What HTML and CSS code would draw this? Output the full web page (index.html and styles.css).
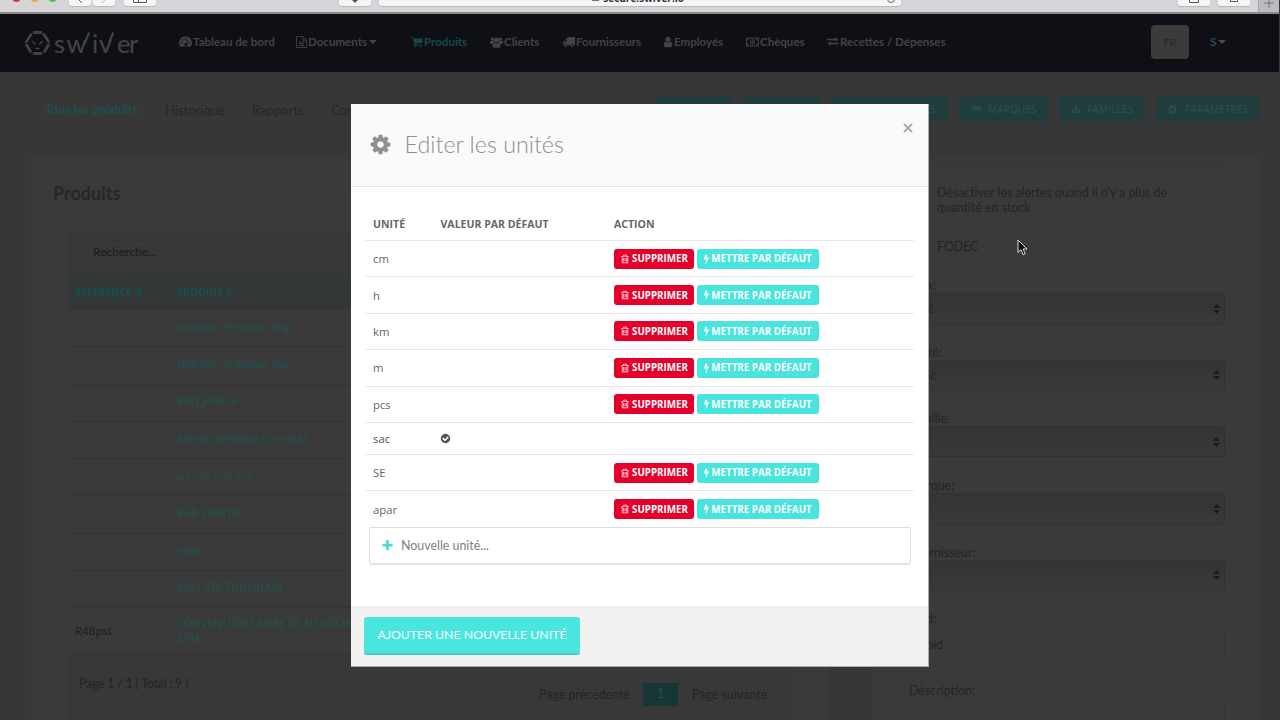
FILE: index.html
```html
<!DOCTYPE html>
<html lang="fr">
<head>
<meta charset="utf-8">
<title>Swiver - Produits</title>
<link rel="stylesheet" href="styles.css">
</head>
<body>
<svg class="defs" width="0" height="0">
  <symbol id="cog" viewBox="0 0 1792 1792"><path d="M1152 896q0-106-75-181t-181-75-181 75-75 181 75 181 181 75 181-75 75-181zm512-109v222q0 12-8 23t-20 13l-185 28q-19 54-39 91 35 50 107 138 10 12 10 25t-9 23q-27 37-99 108t-94 71q-12 0-26-9l-138-108q-44 23-91 38-16 136-29 186-7 28-36 28h-222q-14 0-24.500-8.500t-11.500-21.500l-28-184q-49-16-90-37l-141 107q-10 9-25 9-14 0-25-11-126-114-165-168-7-10-7-23 0-12 8-23 15-21 51-66.500t54-70.500q-27-50-41-99l-183-27q-13-2-21-12.500t-8-23.500v-222q0-12 8-23t19-13l186-28q14-46 39-92-40-57-107-138-10-12-10-24 0-10 9-23 26-36 98.500-107.500t94.500-71.500q13 0 26 10l138 107q44-23 91-38 16-136 29-186 7-28 36-28h222q14 0 24.500 8.500t11.500 21.500l28 184q49 16 90 37l142-107q9-9 24-9 13 0 25 10 129 119 165 170 7 8 7 22 0 12-8 23-15 21-51 66.500t-54 70.500q26 50 41 98l183 28q13 2 21 12.500t8 23.500z"/></symbol>
  <symbol id="check" viewBox="0 0 1792 1792"><path d="M1412 734q0-28-18-46l-91-90q-19-19-45-19t-45 19l-408 407-226-226q-19-19-45-19t-45 19l-91 90q-18 18-18 46 0 27 18 45l362 362q19 19 45 19 27 0 46-19l543-543q18-18 18-45zm252 162q0 209-103 385.500t-279.500 279.500-385.500 103-385.500-103-279.500-279.500-103-385.500 103-385.500 279.500-279.500 385.500-103 385.500 103 279.500 279.500 103 385.500z"/></symbol>
  <symbol id="trash" viewBox="0 0 1792 1792"><path d="M704 736v576q0 14-9 23t-23 9h-64q-14 0-23-9t-9-23v-576q0-14 9-23t23-9h64q14 0 23 9t9 23zm256 0v576q0 14-9 23t-23 9h-64q-14 0-23-9t-9-23v-576q0-14 9-23t23-9h64q14 0 23 9t9 23zm256 0v576q0 14-9 23t-23 9h-64q-14 0-23-9t-9-23v-576q0-14 9-23t23-9h64q14 0 23 9t9 23zm128 724v-948h-896v948q0 22 7 40.500t14.500 27 10.500 8.500h832q3 0 10.500-8.500t14.500-27 7-40.500zm-672-1076h448l-48-117q-7-9-17-11h-317q-10 2-17 11zm928 32v64q0 14-9 23t-23 9h-96v948q0 83-47 143.500t-113 60.500h-832q-66 0-113-58.500t-47-141.500v-952h-96q-14 0-23-9t-9-23v-64q0-14 9-23t23-9h309l70-167q15-37 54-63t79-26h320q40 0 79 26t54 63l70 167h309q14 0 23 9t9 23z"/></symbol>
  <symbol id="bolt" viewBox="448 0 896 1792"><path d="M1333 566q18 20 7 44l-540 1157q-13 25-42 25-4 0-14-2-17-5-25.500-19t-4.500-30l197-808-406 101q-4 1-12 1-18 0-31-11-18-15-13-39l201-825q4-14 16-23t28-9h328q19 0 32 12.500t13 29.500q0 8-5 18l-171 463 396-98q8-2 12-2 19 0 34 15z"/></symbol>
  <symbol id="plus" viewBox="0 0 1792 1792"><path d="M1600 736v192q0 40-28 68t-68 28h-416v416q0 40-28 68t-68 28h-192q-40 0-68-28t-28-68v-416h-416q-40 0-68-28t-28-68v-192q0-40 28-68t68-28h416v-416q0-40 28-68t68-28h192q40 0 68 28t28 68v416h416q40 0 68 28t28 68z"/></symbol>
  <symbol id="user" viewBox="200 0 1400 1792"><path d="M1536 1399q0 109-62.500 187t-150.500 78h-854q-88 0-150.500-78t-62.500-187q0-85 8.500-160.500t31.500-152 58.500-131 94-89 134.500-34.500q131 128 313 128t313-128q76 0 134.500 34.500t94 89 58.500 131 31.500 152 8.500 160.500zm-256-887q0 159-112.500 271.500t-271.500 112.500-271.500-112.500-112.500-271.500 112.500-271.500 271.500-112.500 271.500 112.500 112.500 271.500z"/></symbol>
  <symbol id="cart" viewBox="0 0 1792 1792"><path d="M704 1536q0 52-38 90t-90 38-90-38-38-90 38-90 90-38 90 38 38 90zm896 0q0 52-38 90t-90 38-90-38-38-90 38-90 90-38 90 38 38 90zm128-1088v512q0 24-16.500 42.500t-40.500 21.500l-1044 122q13 60 13 70 0 16-24 64h920q26 0 45 19t19 45-19 45-45 19h-1024q-26 0-45-19t-19-45q0-11 8-31.500t16-36 21.500-40 15.500-29.500l-177-823h-204q-26 0-45-19t-19-45 19-45 45-19h256q16 0 28.500 6.500t19.500 15.500 13 24.500 8 26 5.500 29.500 4.500 26h1201q26 0 45 19t19 45z"/></symbol>
  <symbol id="truck" viewBox="0 0 1792 1792"><path transform="translate(1792 0) scale(-1 1)" d="M1152 1408q0-52 38-90t90-38 90 38 38 90-38 90-90 38-90-38-38-90zm384-512h-384v-256h158q13 0 22 9l195 195q9 9 9 22v30zm-1280 512q0-52 38-90t90-38 90 38 38 90-38 90-90 38-90-38-38-90zm-256-1088v1024q0 64 64 64h64q0 106 75 181t181 75 181-75 75-181h384q0 106 75 181t181 75 181-75 75-181h64q64 0 64-64 0-26-19-45t-45-19v-320q0-110-30-160l-230-230q-50-45-110-45h-160v-192q0-26-19-45t-45-19h-1024q-26 0-45 19t-19 45z"/></symbol>
  <symbol id="dash" viewBox="0 0 14 12"><path fill-rule="evenodd" d="M7 .5a7 7 0 0 0-6 10.600q.3.400.8.400h10.400q.5 0 .8-.4A7 7 0 0 0 7 .5zM2.800 6.500a.9.900 0 1 1 0 1.800.9.900 0 0 1 0-1.800zM4 3.500a.9.900 0 1 1 0 1.800.9.900 0 0 1 0-1.800zM7 2.100a.9.900 0 1 1 0 1.800.9.900 0 0 1 0-1.800zM11.200 6.500a.9.900 0 1 1 0 1.800.9.900 0 0 1 0-1.800zM9.300 3.700l.7.300-1.600 4a1.600 1.600 0 1 1-.8-.3z"/></symbol>
  <symbol id="doc" viewBox="0 0 12 13"><path fill="none" stroke="currentColor" d="M.5 .5h7l4 4v8H.500zM7.500 .5v4h4M3 6.500h6M3 8.500h6M3 10.500h6"/></symbol>
  <symbol id="users" viewBox="0 0 15 13"><circle cx="3" cy="3.200" r="2"/><circle cx="12" cy="3.200" r="2"/><circle cx="7.500" cy="4.200" r="2.900"/><path d="M0 8V6.500Q0 5 1.500 5q1.500.7 3 .3Q4.500 7 5.300 7.500q-1.800.3-2.500 1.300H1.500Q0 8.800 0 8zM15 8V6.500Q15 5 13.500 5q-1.500.7-3 .3 0 1.700-.8 2.200 1.800.3 2.500 1.300h1.300Q15 8.800 15 8zM2.800 11.200q0-3.500 2.500-3.700 2.200 1.400 4.400 0 2.500.2 2.500 3.700 0 1.800-1.600 1.800H4.400Q2.800 13 2.800 11.200z"/></symbol>
  <symbol id="money" viewBox="0 0 14 10"><path fill="none" stroke="currentColor" stroke-width="1.100" d="M.6 .6h12.800v8.800H.6z"/><path fill="none" stroke="currentColor" d="M1 3Q3 3 3 1M11 1q0 2 2 2M1 7q2 0 2 2M11 9q0-2 2-2"/><ellipse cx="7" cy="5" rx="2.100" ry="2.700" fill="none" stroke="currentColor"/><path d="M6.500 3.500h1v3h-1z"/></symbol>
  <symbol id="swap" viewBox="0 0 13 10"><path d="M0 2h9V0l3.500 2.700L9 5.300V3.600H0zM13 8H4v2L.5 7.300 4 4.700v1.700h9z"/></symbol>
  <symbol id="flag" viewBox="0 0 12 10"><path d="M1 0h1v10H1zM2.500 1.200q2-1.200 4 0t4.500 0v4.600q-2.500 1.200-4.500 0t-4 0z"/></symbol>
  <symbol id="sitemap" viewBox="0 0 12 10"><path d="M4.500 0h3v3h-1v1.500h4V7H12v3H8.500V7h1V5.500h-3V7h1v3h-3V7h1V5.500h-3V7h1v3H0V7h1.500V4.500h4V3h-1z"/></symbol>
  <symbol id="sort" viewBox="0 0 7 10"><path d="M0 4l3.500-4L7 4zM0 6h7l-3.500 4z"/></symbol>
</svg>

<div class="screen">
  <div class="chrome">
    <div class="lights"><i class="red"></i><i class="yellow"></i><i class="green"></i></div>
    <div class="pill back"><svg width="6" height="8" viewBox="0 0 6 8"><path d="M5 0L1 4l4 4" fill="none" stroke="#555"/></svg></div>
    <div class="pill fwd"><svg width="6" height="8" viewBox="0 0 6 8"><path d="M1 0l4 4-4 4" fill="none" stroke="#bbb"/></svg></div>
    <div class="pill side"><svg width="14" height="8" viewBox="0 0 14 8"><path d="M.5 0v7.500h13V0M5.500 0v7.500" fill="none" stroke="#555"/></svg></div>
    <div class="pill ext"><svg width="8" height="8" viewBox="0 0 8 8"><path d="M0 4h8L4 8z" fill="#555"/></svg></div>
    <div class="pill address"><i class="lock"></i><span>secure.swiver.io</span><svg width="8" height="8" viewBox="0 0 8 8"><circle cx="4" cy="4" r="3.500" fill="none" stroke="#666"/></svg></div>
    <div class="pill share"><svg width="10" height="8" viewBox="0 0 10 8"><path d="M.5 0v7.500h9V0" fill="none" stroke="#555"/></svg></div>
    <div class="pill tabs"><svg width="8" height="8" viewBox="0 0 8 8"><path d="M.5 0v6.500h7V0" fill="none" stroke="#555"/></svg></div>
    <div class="newtab"><svg width="10" height="10" viewBox="0 0 10 10"><path d="M5 0v10M0 5h10" fill="none" stroke="#777"/></svg></div>
  </div>

  <header class="navbar">
    <svg class="logo" width="115" height="30" viewBox="0 0 115 30">
      <g fill="none" stroke="currentColor" stroke-width="2.800" stroke-linecap="round">
        <path d="M10 4.500h7M20 6.500l4.500 7M24.500 17l-4 6.500M10 25.500h7M6.500 23.500L2.500 17M2.500 13.500l4.500-7"/>
        <path stroke-width="1.500" d="M8.500 13.500l3 2.500M18.500 13.500l-3 2.500M12 20.500h3"/>
        <path stroke-width="2.200" stroke-linecap="butt" d="M60.700 15.500L65.200 4.500M84.800 15.500L89.300 4.500"/>
      </g>
      <text x="30 42.500 68 75 93 105" y="25">swiver</text>
    </svg>
    <nav class="menu">
      <a><svg width="13" height="11"><use href="#dash"/></svg>Tableau de bord</a>
      <a><svg width="11" height="12"><use href="#doc"/></svg>Documents<i class="caret"></i></a>
      <a class="on"><svg width="12" height="12"><use href="#cart"/></svg>Produits</a>
      <a><svg width="13" height="12"><use href="#users"/></svg>Clients</a>
      <a><svg width="13" height="13"><use href="#truck"/></svg>Fournisseurs</a>
      <a><svg width="10" height="12"><use href="#user"/></svg>Employés</a>
      <a><svg width="13" height="10"><use href="#money"/></svg>Chèques</a>
      <a><svg width="12" height="9"><use href="#swap"/></svg>Recettes / Dépenses</a>
    </nav>
    <div class="lang">FR</div>
    <div class="account">S<i class="caret"></i></div>
  </header>

  <div class="subnav">
    <div class="links"><a class="on">Tous les produits</a><a>Historique</a><a>Rapports</a><a>Corbeille</a></div>
    <div class="tools">
      <b></b><b></b><b class="right">UNITÉS</b>
      <b><svg width="11" height="9"><use href="#flag"/></svg>MARQUES</b>
      <b><svg width="10" height="8"><use href="#sitemap"/></svg>FAMILLES</b>
      <b><svg width="11" height="11"><use href="#cog"/></svg>PARAMÈTRES</b>
    </div>
  </div>

  <main class="columns">
    <section class="card list">
      <h2>Produits</h2>
      <div class="panel">
        <div class="search"><div>Recherche...</div></div>
        <div class="row head"><span>RÉFÉRENCE <svg width="7" height="9"><use href="#sort"/></svg></span><span>PRODUIT <svg width="7" height="9"><use href="#sort"/></svg></span></div>
        <div class="row"><span></span><a>charbon el manar 3kg</a></div>
        <div class="row"><span></span><a>charbon el manar 5kg</a></div>
        <div class="row"><span></span><a>BBQ jetable</a></div>
        <div class="row"><span></span><a>allume barbaqu el manar</a></div>
        <div class="row"><span></span><a class="arabic">فحم المنار ثلاثة كيلو</a></div>
        <div class="row"><span></span><a>BAB 200X120</a></div>
        <div class="row"><span></span><a>ewer</a></div>
        <div class="row"><span></span><a>6451 STE TUNISIENN</a></div>
        <div class="row tall"><span>R4BpsL</span><a>CONVENTION CADRE DE NEGOCIATION<br>2016</a></div>
        <div class="foot"><span>Page 1 / 1 ( Total : 9 )</span><div class="pager"><span>Page précédente</span><b>1</b><span>Page suivante</span></div></div>
      </div>
    </section>
    <section class="card form">
      <div class="rule"></div>
      <p class="opt">Désactiver les alertes quand il n'y a plus de quantité en stock</p>
      <p class="opt fodec">FODEC</p>
      <div class="field"><label>TVA:</label><div class="select">12<svg width="7" height="12"><use href="#sort"/></svg></div></div>
      <div class="field"><label>Unité:</label><div class="select">sac<svg width="7" height="12"><use href="#sort"/></svg></div></div>
      <div class="field"><label>Famille:</label><div class="select"><svg width="7" height="12"><use href="#sort"/></svg></div></div>
      <div class="field"><label>Marque:</label><div class="select"><svg width="7" height="12"><use href="#sort"/></svg></div></div>
      <div class="field"><label>Fournisseur:</label><div class="select"><svg width="7" height="12"><use href="#sort"/></svg></div></div>
      <div class="field poid"><label>Poid:</label><div class="input">Poid</div></div>
      <div class="field"><label>Déscription:</label><div class="input"></div></div>
    </section>
  </main>

  <div class="modal">
    <div class="modal-head"><svg width="23" height="23"><use href="#cog"/></svg><h1>Editer les unités</h1><svg class="close" width="10" height="10" viewBox="0 0 10 10"><path d="M1 1l8 8M9 1L1 9"/></svg></div>
    <div class="modal-body">
      <div class="unit th"><span>UNITÉ</span><span>VALEUR PAR DÉFAUT</span><span>ACTION</span></div>
      <div class="unit"><span>cm</span><span></span><div class="acts"><b class="del"><svg width="10" height="10"><use href="#trash"/></svg>SUPPRIMER</b><b class="def"><svg width="5" height="10"><use href="#bolt"/></svg>METTRE PAR DÉFAUT</b></div></div>
      <div class="unit"><span>h</span><span></span><div class="acts"><b class="del"><svg width="10" height="10"><use href="#trash"/></svg>SUPPRIMER</b><b class="def"><svg width="5" height="10"><use href="#bolt"/></svg>METTRE PAR DÉFAUT</b></div></div>
      <div class="unit"><span>km</span><span></span><div class="acts"><b class="del"><svg width="10" height="10"><use href="#trash"/></svg>SUPPRIMER</b><b class="def"><svg width="5" height="10"><use href="#bolt"/></svg>METTRE PAR DÉFAUT</b></div></div>
      <div class="unit"><span>m</span><span></span><div class="acts"><b class="del"><svg width="10" height="10"><use href="#trash"/></svg>SUPPRIMER</b><b class="def"><svg width="5" height="10"><use href="#bolt"/></svg>METTRE PAR DÉFAUT</b></div></div>
      <div class="unit"><span>pcs</span><span></span><div class="acts"><b class="del"><svg width="10" height="10"><use href="#trash"/></svg>SUPPRIMER</b><b class="def"><svg width="5" height="10"><use href="#bolt"/></svg>METTRE PAR DÉFAUT</b></div></div>
      <div class="unit short"><span>sac</span><span><svg width="11" height="11"><use href="#check"/></svg></span></div>
      <div class="unit"><span>SE</span><span></span><div class="acts"><b class="del"><svg width="10" height="10"><use href="#trash"/></svg>SUPPRIMER</b><b class="def"><svg width="5" height="10"><use href="#bolt"/></svg>METTRE PAR DÉFAUT</b></div></div>
      <div class="unit last"><span>apar</span><span></span><div class="acts"><b class="del"><svg width="10" height="10"><use href="#trash"/></svg>SUPPRIMER</b><b class="def"><svg width="5" height="10"><use href="#bolt"/></svg>METTRE PAR DÉFAUT</b></div></div>
      <div class="new-unit"><svg width="13" height="13"><use href="#plus"/></svg>Nouvelle unité...</div>
    </div>
    <div class="modal-foot"><div class="add">AJOUTER UNE NOUVELLE UNITÉ</div></div>
  </div>
  <svg class="cursor" width="11" height="17" viewBox="0 0 11 17"><path d="M1 1v12.500l3-2.800 2 5 2.200-1-2.100-4.700H10z" fill="#111" stroke="#ddd"/></svg>
</div>
</body>
</html>
```
FILE: styles.css
```css
* { box-sizing: border-box; }
body { margin: 0; font-family: Lato, sans-serif; overflow: hidden; background: #373737; }
p, h1, h2 { margin: 0; }
svg { fill: currentColor; flex: none; }
.defs { display: block; height: 0; }
.screen { position: relative; width: 1280px; height: 720px; overflow: hidden; display: flex; flex-direction: column; border-right: 1px solid #34344a; }

/* browser toolbar */
.chrome { height: 14px; flex: none; background: #d6d4d6; border-bottom: 2px solid #8b8a8e; display: flex; align-items: flex-start; }
.lights { display: flex; gap: 9px; padding-left: 12px; width: 69px; margin-top: -7px; }
.lights i { width: 9px; height: 9px; border-radius: 50%; }
.red { background: #d9304f; }
.yellow { background: #e0b13c; }
.green { background: #3fc950; }
.pill { height: 6px; background: #f7f6f7; border-radius: 0 0 3px 3px; box-shadow: 0 1px 0 #b9b7b9; display: flex; justify-content: center; overflow: hidden; }
.pill svg { margin-top: -5px; }
.back { width: 22px; }
.fwd { width: 22px; margin-left: 2px; }
.side { width: 32px; margin-left: 9px; }
.ext { width: 32px; margin-left: 183px; }
.address { width: 522px; margin-left: 8px; font: bold 10px/10px "Open Sans", sans-serif; color: #333; justify-content: flex-end; padding-right: 6px; }
.address span { margin-top: -7px; margin-right: 203px; }
.lock { width: 7px; height: 1px; margin-right: 4px; background: #777; }
.share { width: 32px; margin-left: 277px; }
.tabs { width: 32px; margin-left: 8px; }
.newtab { flex: 1; height: 12px; margin-left: 8px; background: #bdbbbe; border-left: 1px solid #a5a3a6; padding-left: 5px; overflow: hidden; }
.newtab svg { display: block; margin-top: -2px; }

/* navigation */
.navbar { height: 58px; flex: none; background: #0f1016; display: flex; align-items: center; color: #424347; font-weight: 700; font-size: 11.550px; }
.logo { margin-left: 24px; width: 115px; overflow: visible; color: #434347; }
.logo text { font: 400 25.500px Lato, sans-serif; stroke: currentColor; stroke-width: .2; }
.menu { margin: -3px 0 0 40px; width: 972px; display: grid; grid-template-columns: 117px 115px 79px 72px 101px 83px 81px 1fr; }
.menu a { display: flex; align-items: center; gap: 1px; white-space: nowrap; }
.menu .on { color: #174a47; }
.caret { border: 4px solid transparent; border-top-color: currentColor; border-bottom: 0; margin-left: 1px; }
.lang { width: 38px; height: 34px; border-radius: 4px; background: #3b3b3b; color: #292929; display: flex; align-items: center; justify-content: center; font-weight: 400; font-size: 11px; margin-top: -2px; }
.account { margin: -3px 0 0 21px; color: #1c5452; display: flex; align-items: center; font-size: 12px; }
.account .caret { color: #4a4b4e; margin-left: 1px; }

/* section tabs */
.subnav { height: 60px; flex: none; margin: 0 16px; padding: 26px 4px 0 29px; border-bottom: 1px solid #343434; display: flex; justify-content: space-between; }
.links { display: grid; grid-template-columns: 120px 87px 79px 60px; font-size: 13px; line-height: 24px; color: #262626; }
.links .on { color: #1c4f4d; font-weight: 700; font-size: 12.500px; }
.tools { display: grid; grid-template-columns: 77px 77px 117px 89px 86px 103px; column-gap: 11px; height: 24px; color: #2f4b4a; font: 600 10px "Open Sans", sans-serif; }
.tools b { height: 24px; margin-top: -1px; border-radius: 2px; background: #1f3d3c; display: flex; align-items: center; justify-content: center; gap: 6px; font-weight: 600; }
.tools .right { justify-content: flex-end; padding-right: 12px; }

/* product list and form */
.columns { display: flex; padding: 26px 18px 0 31px; gap: 44px; align-items: flex-start; }
.card { background: #3a3a3a; height: 580px; }
.list { width: 798px; padding: 23px 35px 0 22px; }
h2 { font-size: 18px; line-height: 24px; color: #27262a; }
.panel { margin: 27px 0 0 15px; background: #383838; }
.search { height: 43px; padding: 8px 11px; }
.search div { width: 222px; height: 23px; border: 1px solid #343434; border-radius: 2px; padding-left: 13px; font: 12px/21px Lato, sans-serif; color: #1f1f1f; -webkit-text-stroke: .2px; }
.row { display: grid; grid-template-columns: 102px 1fr; padding: 0 0 2px 7px; height: 37.250px; align-items: center; background: #3a3a3a; border-bottom: 1px solid #343434; font: 600 11px/15px "Open Sans", sans-serif; color: #242426; }
.row a { color: #20504e; white-space: nowrap; font-size: 10.750px; }
.row .arabic { font-family: "DejaVu Sans", sans-serif; font-size: 9px; font-weight: 400; }
.head { height: 35px; background: #333737; color: #14504c; border-color: #2f3636; font-weight: 700; font-size: 10.300px; padding-bottom: 0; }
.head svg { vertical-align: -1px; }
.tall { height: 47px; padding-bottom: 1px; }
.foot { height: 70px; padding: 17px 12px 0 11px; display: flex; justify-content: space-between; font-size: 12.400px; line-height: 23px; color: #242424; }
.foot > span { letter-spacing: -.22px; }
.pager { display: flex; margin-top: 11px; height: 23px; border: 1px solid #343434; border-radius: 3px; line-height: 22px; }
.pager span { width: 117px; text-align: center; }
.pager span:last-child { width: 103px; }
.pager b { width: 35px; background: #153635; color: #284f4e; text-align: center; font-weight: 400; margin: -1px 0; }
.form { width: 388px; padding: 3px 36px 0; font-size: 12.400px; line-height: 15px; color: #242424; }
.rule { height: 4px; border-bottom: 1px solid #343434; }
.opt { padding: 20px 30px 0 28px; letter-spacing: -.03px; }
.fodec { padding-top: 24px; margin-bottom: 24px; }
.field { height: 66.700px; }
.field label { display: block; height: 15px; }
.select { height: 31px; border: 1px solid #323232; border-radius: 3px; background: linear-gradient(#343434, #393939); display: flex; align-items: center; padding: 0 4px 0 9px; }
.select svg { margin-left: auto; color: #1c1c1c; }
.input { height: 37px; border: 1px solid #353535; border-radius: 2px; padding: 10px 9px; }
.poid { height: 72px; }

/* dialog */
.modal { position: absolute; left: 351px; top: 104px; width: 578px; height: 563px; background: #fff; display: flex; flex-direction: column; border: 1px solid #aaa; border-width: 0 1px 1px 0; color: #666; }
.modal-head { height: 83px; flex: none; background: #fafafa; border-bottom: 1px solid #e4e4e4; display: flex; align-items: center; padding: 0 15px 2px 18px; color: #909090; }
h1 { font-size: 23.300px; font-weight: 300; margin-left: 12.500px; color: #8e8e8e; }
.close { margin: -33px 0 0 auto; fill: none; stroke: #aaa; stroke-width: 2; }
.modal-body { height: 419px; flex: none; padding: 21px 13px 0 14px; }
.unit { display: grid; grid-template-columns: 67.500px 173.500px 1fr; height: 36.400px; align-items: center; padding-left: 8px; margin-right: 1px; border-bottom: 1px solid #e9e9e9; font: 500 11.300px "Open Sans", sans-serif; }
.th { height: 33px; font-weight: 700; font-size: 10.550px; padding-bottom: 1px; }
.unit svg { display: block; }
.short { height: 32px; color: #555; }
.short svg { margin-left: -1px; }
.last { border: 0; height: 35.700px; }
.acts { display: flex; gap: 3px; }
.acts b { height: 20px; border-radius: 3px; display: flex; align-items: center; justify-content: center; gap: 2px; font-size: 9.800px; color: #fff; white-space: nowrap; }
.del { width: 80px; background: #e4002b; }
.def { width: 122px; background: #49e4de; }
.new-unit { margin: 0 4px; height: 38px; border: 1px solid #ddd; border-bottom: 2px solid #e4e4e4; border-radius: 2px; display: flex; align-items: center; padding-left: 11px; gap: 7px; font-size: 12.400px; color: #808080; }
.new-unit svg { color: #49dcd6; }
.modal-foot { flex: 1; background: #f1f1f1; padding: 11px 13px; }
.add { width: 216px; height: 38px; background: #49e6e0; border-bottom: 2px solid #4cc9c4; border-radius: 3px; color: #fff; text-align: center; font-size: 12.300px; line-height: 35px; white-space: nowrap; }
.cursor { position: absolute; left: 1017px; top: 239px; }
```
